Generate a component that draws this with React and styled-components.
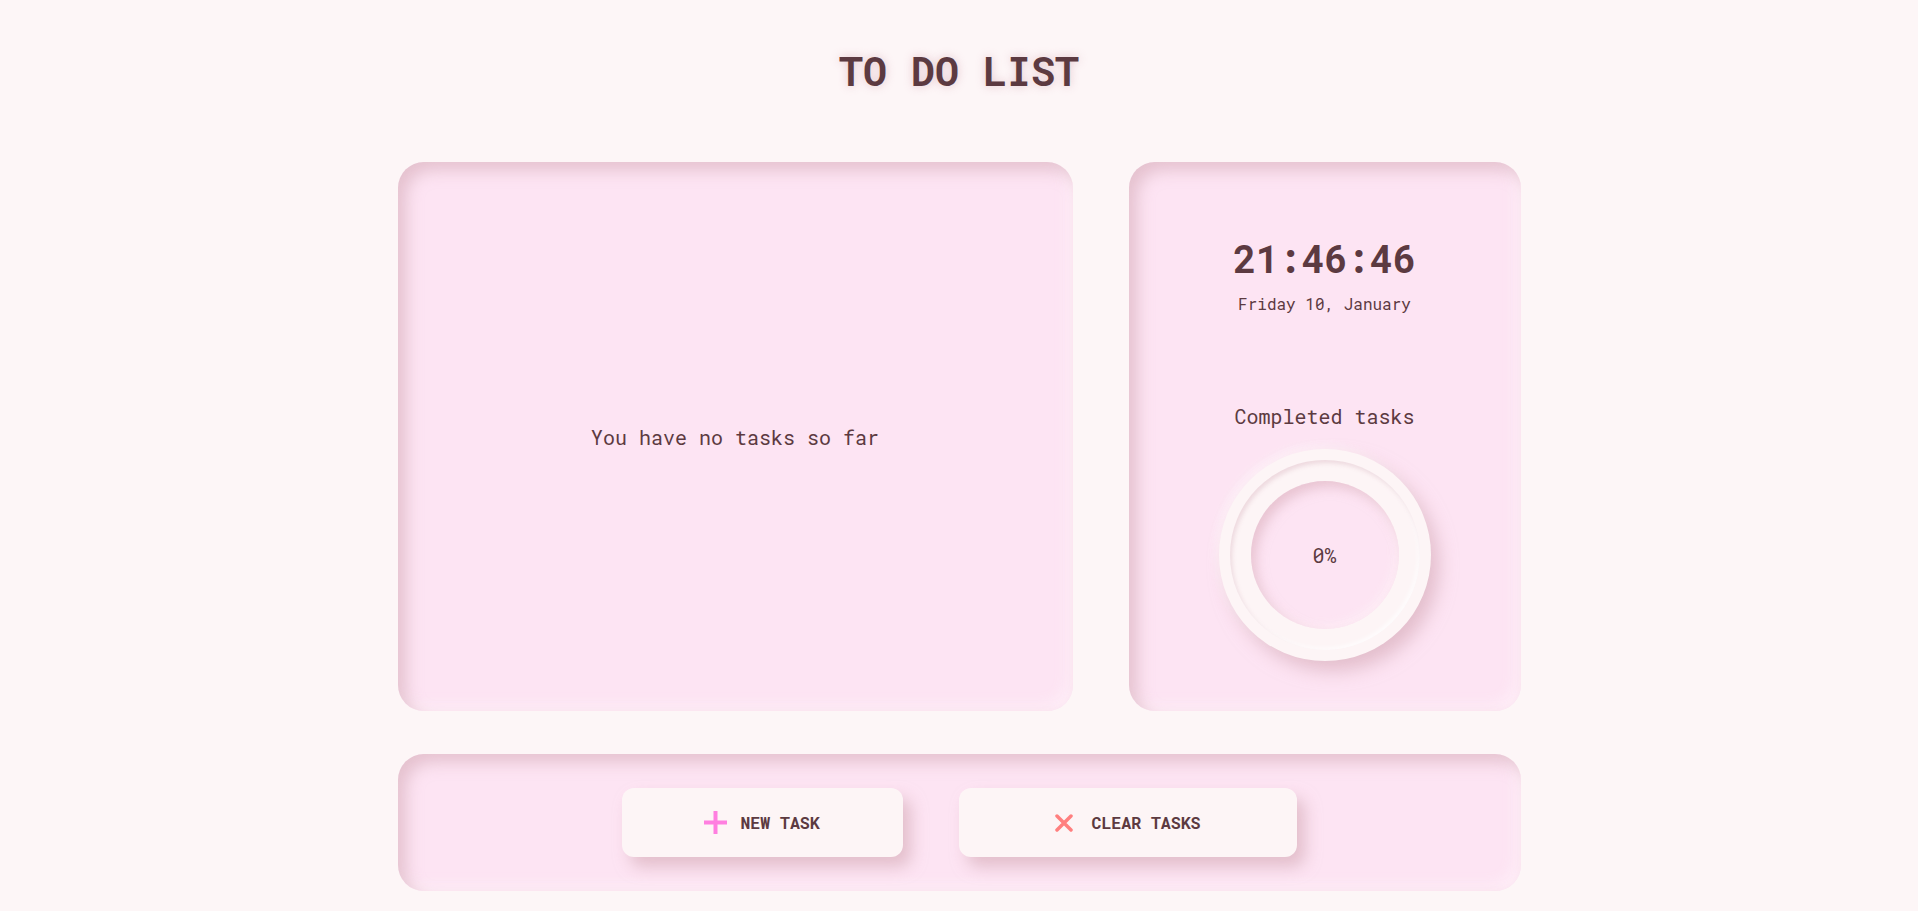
import React from "react";
import styled, { createGlobalStyle } from "styled-components";

const Global = createGlobalStyle`
  html, body { margin: 0; padding: 0; background: #fdf6f7; }
  body { font-family: "Roboto Mono", "DejaVu Sans Mono", "Liberation Mono", monospace; color: #5c3a41; }
`;

const Page = styled.div`
  min-height: 911px;
  display: flex;
  flex-direction: column;
  align-items: center;
  padding-top: 47px;
  box-sizing: border-box;
`;

const Title = styled.h1`
  margin: 0 0 67px;
  font-size: 40px;
  line-height: 48px;
  font-weight: 700;
  color: #5c3a41;
  text-shadow: 0 0 10px rgba(200, 140, 155, 0.45);
  letter-spacing: 0;
`;

const Main = styled.div`
  width: 1123px;
  display: grid;
  grid-template-columns: 675px 392px;
  column-gap: 56px;
  height: 549px;
`;

const Panel = styled.section`
  background: #fde4f3;
  border-radius: 26px;
  box-shadow: inset 8px 8px 16px rgba(205, 160, 172, 0.5),
    inset -6px -6px 14px rgba(255, 240, 248, 0.9);
  box-sizing: border-box;
`;

const TaskPanel = styled(Panel)`
  display: flex;
  align-items: center;
  justify-content: center;
`;

const Empty = styled.p`
  margin: 0;
  font-size: 20px;
  line-height: 24px;
  color: #5c3a41;
`;

const SidePanel = styled(Panel)`
  display: flex;
  flex-direction: column;
  align-items: center;
  padding-top: 73px;
`;

const Clock = styled.div`
  font-size: 38px;
  line-height: 46px;
  font-weight: 700;
  color: #5c3a41;
`;

const DateText = styled.div`
  margin-top: 13px;
  font-size: 16px;
  line-height: 20px;
`;

const Label = styled.div`
  margin-top: 90px;
  font-size: 20px;
  line-height: 24px;
`;

const Ring = styled.div`
  margin-top: 21px;
  width: 212px;
  height: 212px;
  border-radius: 50%;
  background: #fdf5f6;
  box-shadow: 8px 10px 18px rgba(210, 165, 178, 0.6), -4px -4px 10px rgba(255, 250, 252, 0.6);
  display: flex;
  align-items: center;
  justify-content: center;
`;

const RingMid = styled.div`
  width: 190px;
  height: 190px;
  border-radius: 50%;
  background: #fdf5f6;
  box-shadow: inset 2px 3px 4px rgba(220, 185, 195, 0.45), inset -2px -2px 4px rgba(255, 255, 255, 0.8);
  display: flex;
  align-items: center;
  justify-content: center;
`;

const Hole = styled.div`
  width: 148px;
  height: 148px;
  border-radius: 50%;
  background: #fde4f3;
  box-shadow: inset 5px 6px 12px rgba(215, 170, 182, 0.55), inset -4px -4px 10px rgba(255, 240, 248, 0.8);
  display: flex;
  align-items: center;
  justify-content: center;
  font-size: 20px;
  color: #5c3a41;
`;

const Footer = styled(Panel)`
  width: 1123px;
  height: 137px;
  margin-top: 43px;
  display: flex;
  align-items: center;
  justify-content: center;
  gap: 56px;
`;

const Button = styled.button`
  width: ${(p) => p.$w}px;
  height: 69px;
  border: none;
  border-radius: 12px;
  background: #fdf5f6;
  box-shadow: 8px 10px 16px rgba(205, 160, 172, 0.55);
  display: flex;
  align-items: center;
  justify-content: center;
  gap: ${(p) => p.$gap}px;
  font-family: inherit;
  font-size: 16.5px;
  font-weight: 700;
  color: #5c3a41;
  cursor: pointer;
  padding: 0;
`;

const Icon = styled.svg`
  display: block;
  flex: none;
`;

export default function App() {
  return (
    <>
      <Global />
      <Page>
        <Title>TO DO LIST</Title>
        <Main>
          <TaskPanel>
            <Empty>You have no tasks so far</Empty>
          </TaskPanel>
          <SidePanel>
            <Clock>21:46:46</Clock>
            <DateText>Friday 10, January</DateText>
            <Label>Completed tasks</Label>
            <Ring>
              <RingMid>
                <Hole>0%</Hole>
              </RingMid>
            </Ring>
          </SidePanel>
        </Main>
        <Footer>
          <Button $w={281} $gap={13}>
            <Icon width="23" height="23" viewBox="0 0 23 23">
              <path d="M11.5 0.5V22.5M0.5 11.5H22.5" stroke="#ff7fe0" strokeWidth="4" strokeLinecap="round" />
            </Icon>
            NEW TASK
          </Button>
          <Button $w={338} $gap={19}>
            <Icon width="18" height="18" viewBox="0 0 18 18">
              <path d="M2 2L16 16M16 2L2 16" stroke="#ff7f7f" strokeWidth="3.5" strokeLinecap="round" />
            </Icon>
            CLEAR TASKS
          </Button>
        </Footer>
      </Page>
    </>
  );
}
